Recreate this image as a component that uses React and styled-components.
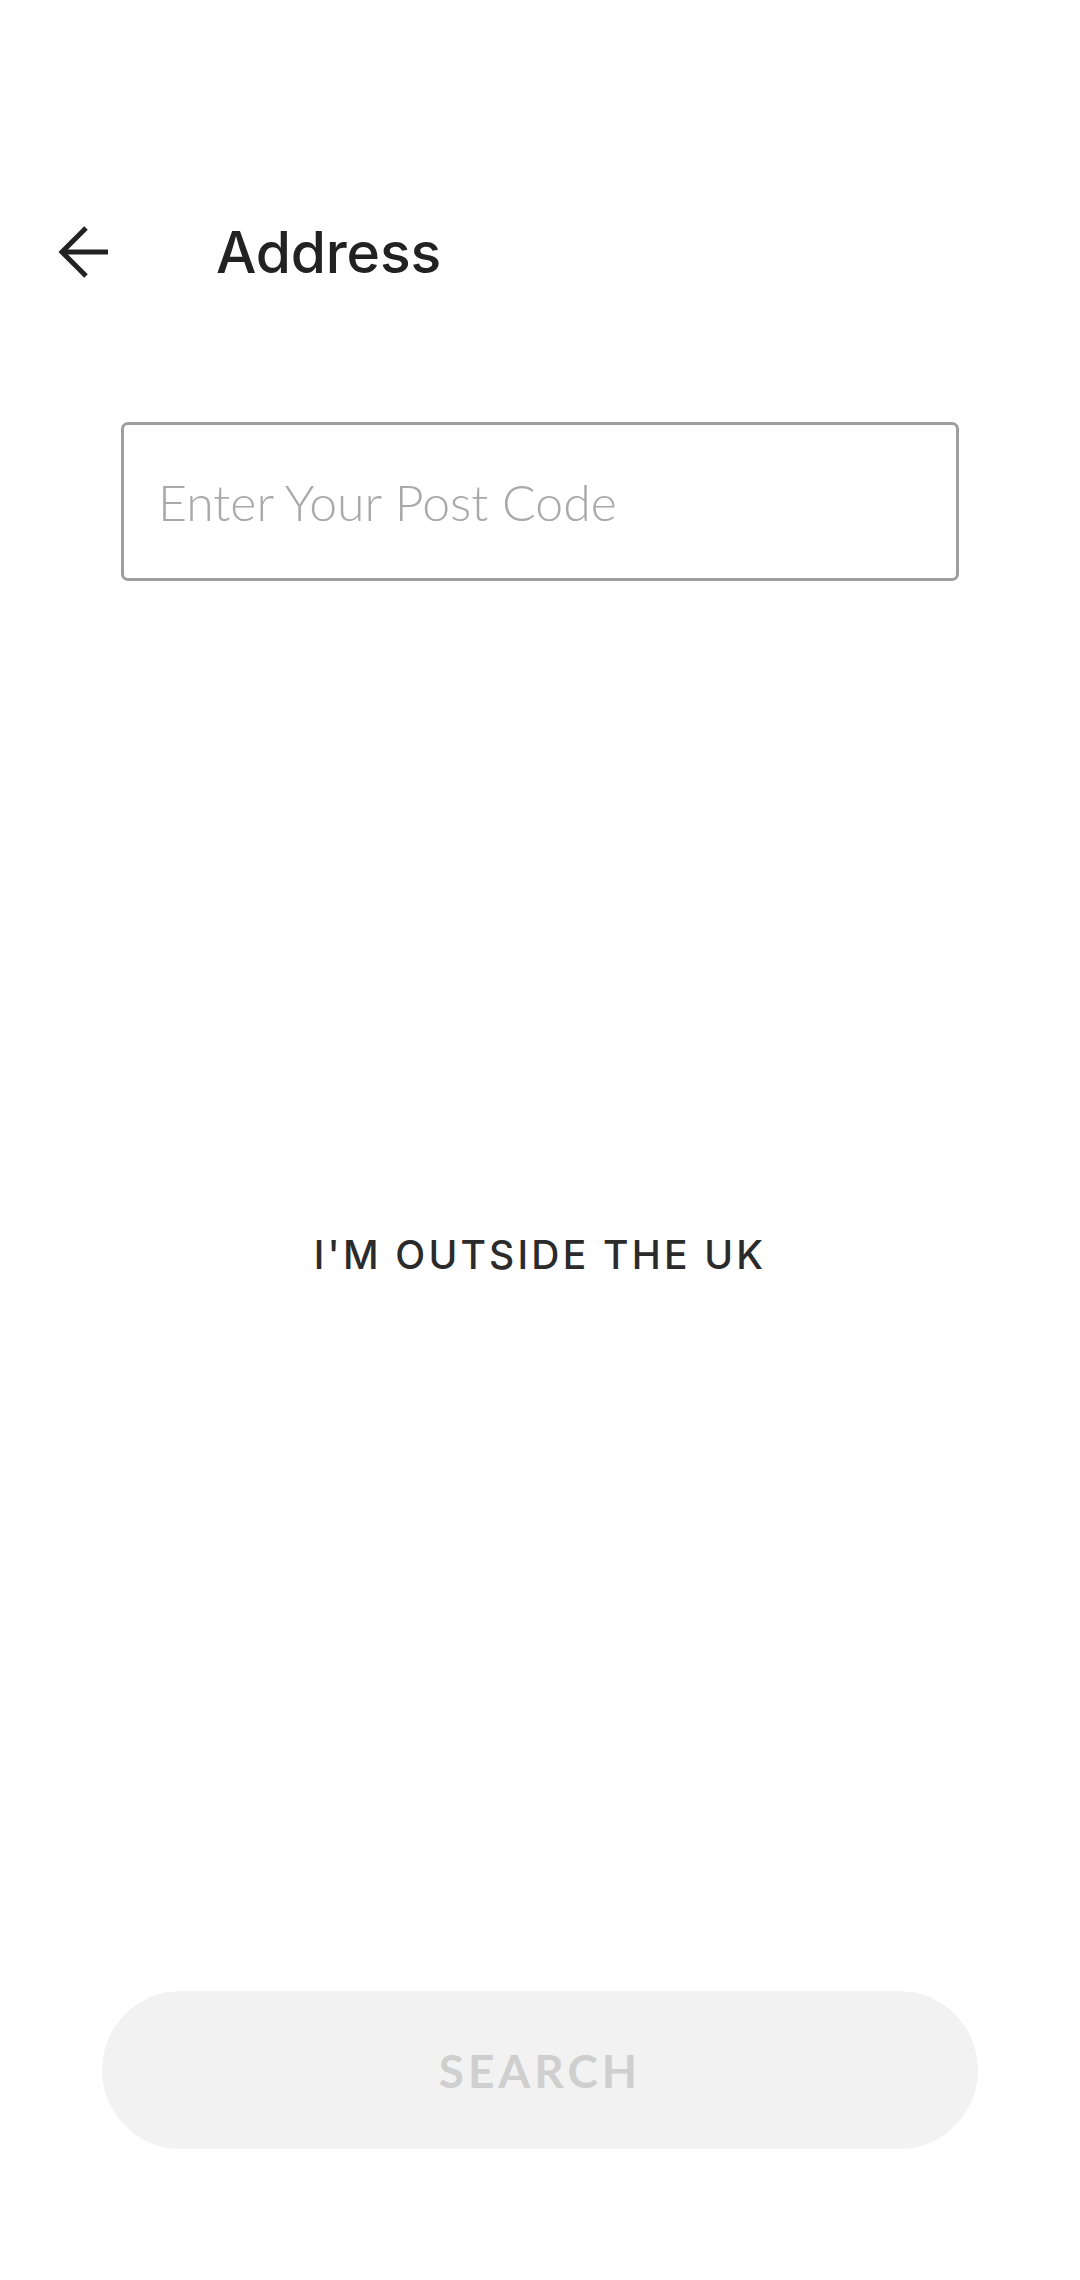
import React from "react";
import styled, { createGlobalStyle } from "styled-components";

const Global = createGlobalStyle`
  html, body { margin: 0; padding: 0; background: #ffffff; }
  body { font-family: "Inter", "Lato", "Liberation Sans", sans-serif; }
  * { box-sizing: border-box; }
`;

const Page = styled.div`
  width: 1080px;
  min-height: 2280px;
  display: flex;
  flex-direction: column;
  background: #ffffff;
`;

const Header = styled.header`
  margin-top: 200px;
  height: 104px;
  display: flex;
  align-items: center;
  padding-left: 56px;
`;

const BackButton = styled.button`
  width: 56px;
  height: 56px;
  padding: 0;
  border: none;
  background: transparent;
  display: flex;
  align-items: center;
  justify-content: center;
  color: #222222;
`;

const Title = styled.h1`
  margin: 0 0 0 104px;
  font-family: "Inter", "Lato", sans-serif;
  font-weight: 500;
  font-size: 57px;
  letter-spacing: -0.2px;
  color: #222222;
`;

const PostInput = styled.input`
  margin: 118px 0 0 121px;
  width: 838px;
  height: 159px;
  border: 3px solid #9e9e9e;
  border-radius: 7px;
  padding: 0 0 0 34px;
  font-family: "Lato", "Inter", sans-serif;
  font-weight: 300;
  font-size: 50px;
  color: #333333;
  outline: none;
  &::placeholder { color: #a9a9a9; }
`;

const OutsideLink = styled.button`
  margin: 650px auto 0;
  border: none;
  background: transparent;
  padding: 0;
  font-family: "Inter", "Lato", sans-serif;
  font-weight: 500;
  font-size: 39px;
  letter-spacing: 3.2px;
  color: #2b2b2b;
`;

const Spacer = styled.div`
  flex: 1;
`;

const SearchButton = styled.button`
  margin: 0 auto 131px;
  width: 876px;
  height: 158px;
  border: none;
  border-radius: 79px;
  background: #f2f2f2;
  font-family: "Lato", "Inter", sans-serif;
  font-weight: 700;
  font-size: 46px;
  letter-spacing: 4px;
  color: #cfcfcf;
`;

function BackArrow() {
  return (
    <svg width="52" height="52" viewBox="0 0 52 52" fill="none">
      <path d="M4 26 H50" stroke="currentColor" strokeWidth="5" />
      <path d="M28 2 L4 26 L28 50" stroke="currentColor" strokeWidth="5" strokeLinejoin="miter" />
    </svg>
  );
}

export default function App() {
  return (
    <>
      <Global />
      <Page>
        <Header>
          <BackButton aria-label="Back">
            <BackArrow />
          </BackButton>
          <Title>Address</Title>
        </Header>
        <PostInput placeholder="Enter Your Post Code" />
        <OutsideLink>I'M OUTSIDE THE UK</OutsideLink>
        <Spacer />
        <SearchButton disabled>SEARCH</SearchButton>
      </Page>
    </>
  );
}
